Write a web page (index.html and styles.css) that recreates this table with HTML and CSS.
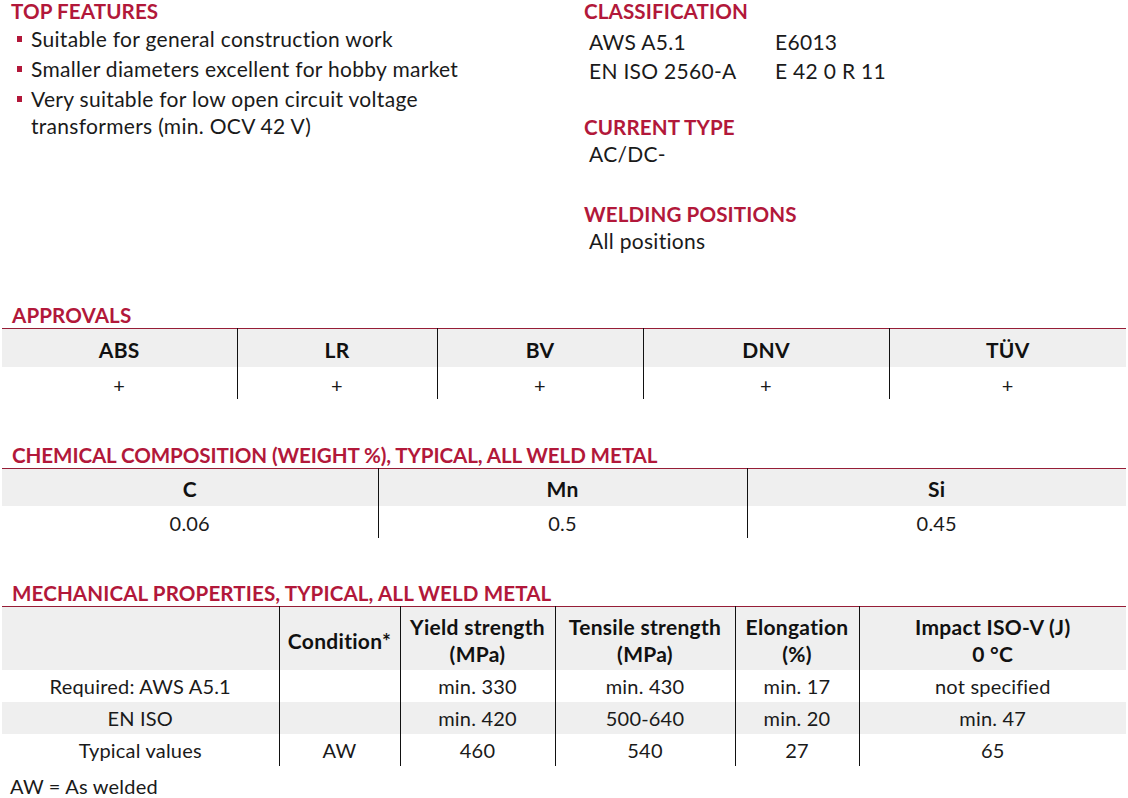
FILE: index.html
```html
<!DOCTYPE html>
<html lang="en">
<head>
<meta charset="utf-8">
<title>Data sheet</title>
<link rel="stylesheet" href="styles.css">
</head>
<body>
<div class="page">
  <div class="top">
    <section class="col-left">
      <h2 class="heading">TOP FEATURES</h2>
      <ul class="features">
        <li>Suitable for general construction work</li>
        <li>Smaller diameters excellent for hobby market</li>
        <li>Very suitable for low open circuit voltage transformers (min. OCV 42 V)</li>
      </ul>
    </section>
    <section class="col-right">
      <h2 class="heading">CLASSIFICATION</h2>
      <div class="class-grid">
        <span>AWS A5.1</span><span>E6013</span>
        <span>EN ISO 2560-A</span><span>E 42 0 R 11</span>
      </div>
      <h2 class="heading gap-current">CURRENT TYPE</h2>
      <p class="value">AC/DC-</p>
      <h2 class="heading gap-welding">WELDING POSITIONS</h2>
      <p class="value">All positions</p>
    </section>
  </div>

  <section class="approvals">
    <h2 class="heading tbl-heading">APPROVALS</h2>
    <table class="tbl">
      <colgroup>
        <col class="w235"><col class="w200"><col class="w206"><col class="w246"><col>
      </colgroup>
      <thead>
        <tr class="hdr"><th>ABS</th><th>LR</th><th>BV</th><th>DNV</th><th>TÜV</th></tr>
      </thead>
      <tbody>
        <tr class="row plus"><td>+</td><td>+</td><td>+</td><td>+</td><td>+</td></tr>
      </tbody>
    </table>
  </section>

  <section class="chem">
    <h2 class="heading tbl-heading tight">CHEMICAL COMPOSITION (WEIGHT %), TYPICAL, ALL WELD METAL</h2>
    <table class="tbl">
      <colgroup>
        <col class="w376"><col class="w369"><col>
      </colgroup>
      <thead>
        <tr class="hdr"><th>C</th><th>Mn</th><th>Si</th></tr>
      </thead>
      <tbody>
        <tr class="row"><td>0.06</td><td>0.5</td><td>0.45</td></tr>
      </tbody>
    </table>
  </section>

  <section class="mech">
    <h2 class="heading tbl-heading">MECHANICAL PROPERTIES, TYPICAL, ALL WELD METAL</h2>
    <table class="tbl">
      <colgroup>
        <col class="w277"><col class="w121"><col class="w155"><col class="w180"><col class="w124"><col>
      </colgroup>
      <thead>
        <tr class="hdr hdr2"><th></th><th>Condition*</th><th>Yield strength<br>(MPa)</th><th>Tensile strength<br>(MPa)</th><th>Elongation<br>(%)</th><th>Impact ISO-V (J)<br>0 °C</th></tr>
      </thead>
      <tbody>
        <tr class="row"><td>Required: AWS A5.1</td><td></td><td>min. 330</td><td>min. 430</td><td>min. 17</td><td>not specified</td></tr>
        <tr class="row shade"><td>EN ISO</td><td></td><td>min. 420</td><td>500-640</td><td>min. 20</td><td>min. 47</td></tr>
        <tr class="row"><td>Typical values</td><td>AW</td><td>460</td><td>540</td><td>27</td><td>65</td></tr>
      </tbody>
    </table>
    <p class="note">AW = As welded</p>
  </section>
</div>
</body>
</html>
```

FILE: styles.css
```css
* { box-sizing: border-box; }

html, body {
  margin: 0;
  padding: 0;
  background: #ffffff;
}

body {
  font-family: Lato, "Liberation Sans", sans-serif;
  font-size: 20px;
  color: #1a1a1a;
}

.page {
  padding: 0 2px;
}

.heading {
  margin: 0;
  font-size: 20.6px;
  letter-spacing: 0.1px;
  line-height: 22px;
  font-weight: 700;
  color: #b2183a;
}

.heading.tight {
  letter-spacing: -0.1px;
}

.top {
  display: flex;
}

.col-left {
  width: 582px;
  padding-left: 9px;
}

.col-right {
  flex: 1;
}

.features {
  list-style: none;
  margin: 3px 0 0;
  padding: 0;
  font-size: 21px;
  letter-spacing: 0.3px;
}

.features li {
  position: relative;
  padding-left: 20px;
  margin-right: 110px;
  line-height: 27px;
  margin-bottom: 3px;
}

.features li::before {
  content: "";
  position: absolute;
  left: 6px;
  top: 11px;
  width: 5px;
  height: 6px;
  background: #b2183a;
}

.class-grid {
  display: grid;
  grid-template-columns: 186px auto;
  padding-left: 5px;
  margin-top: 5px;
  line-height: 29px;
  font-size: 21px;
  letter-spacing: 0.3px;
}

.gap-current {
  margin-top: 31px;
}

.gap-welding {
  margin-top: 36px;
}

.value {
  margin: 2px 0 0;
  padding-left: 5px;
  line-height: 27px;
  font-size: 21px;
  letter-spacing: 0.3px;
}

.approvals {
  margin-top: 50px;
}

.chem {
  margin-top: 45px;
}

.mech {
  margin-top: 44px;
}

.tbl-heading {
  padding-left: 10px;
  padding-bottom: 2px;
}

.tbl {
  width: 1124px;
  border-collapse: collapse;
  table-layout: fixed;
  border-top: 1px solid #961d36;
}

.w235 { width: 235px; }
.w200 { width: 200px; }
.w206 { width: 206px; }
.w246 { width: 246px; }
.w376 { width: 376px; }
.w369 { width: 369px; }
.w277 { width: 277px; }
.w121 { width: 121px; }
.w155 { width: 155px; }
.w180 { width: 180px; }
.w124 { width: 124px; }

.tbl th,
.tbl td {
  padding: 0;
  text-align: center;
  border-left: 1px solid #111;
}

.tbl th:first-child,
.tbl td:first-child {
  border-left: none;
}

.hdr {
  background: #efefef;
  height: 38px;
}

.hdr th {
  font-weight: 700;
  font-size: 21px;
  letter-spacing: 0.3px;
  line-height: 27px;
  padding-top: 3px;
  color: #111;
}

.hdr2 {
  height: 63px;
}

.hdr2 th {
  padding-top: 4px;
}

.row {
  height: 31px;
}

.row td {
  line-height: 27px;
  vertical-align: middle;
  letter-spacing: 0.2px;
  padding-top: 2px;
}

.row.plus {
  height: 30px;
}

.plus td {
  padding-top: 5px;
}

.shade {
  background: #efefef;
}

.chem .row,
.mech .row {
  height: 32px;
}

.note {
  margin: 7px 0 0;
  padding-left: 8px;
  line-height: 27px;
  letter-spacing: 0.2px;
}
```
